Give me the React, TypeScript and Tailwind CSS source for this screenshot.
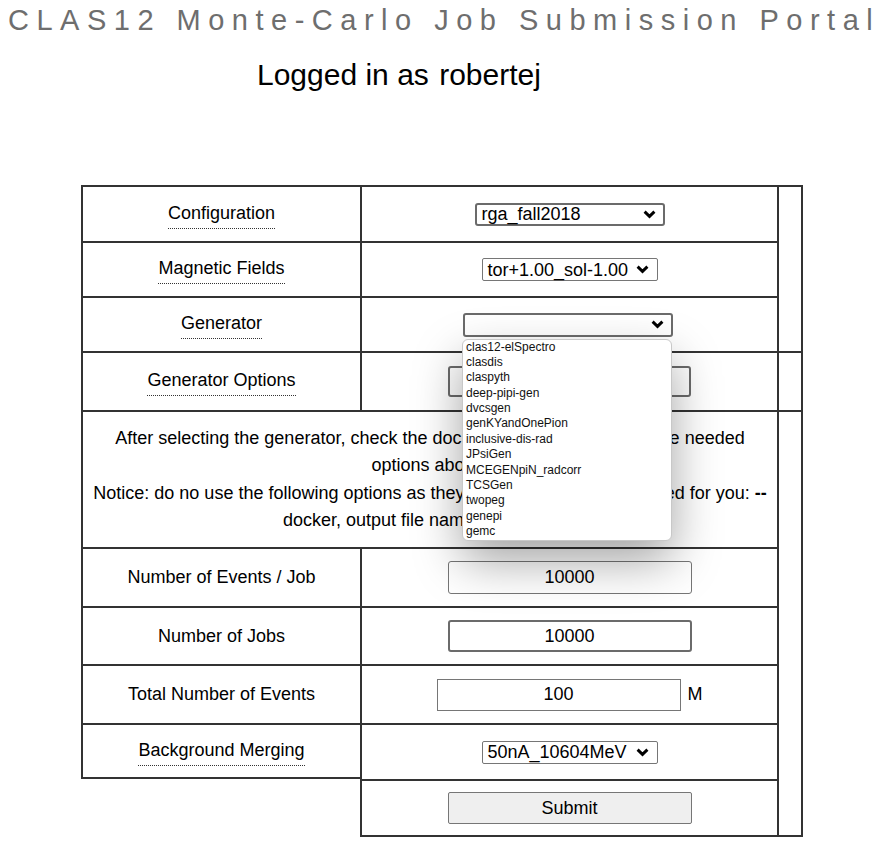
import React from "react";

const Chevron = () => (
  <svg width="13" height="9" viewBox="0 0 13 9" className="shrink-0">
    <polyline points="1.6,1.6 6.5,6.4 11.4,1.6" fill="none" stroke="#000" strokeWidth="2.9" />
  </svg>
);

const Label = ({ children, dotted }: { children: React.ReactNode; dotted?: boolean }) =>
  dotted ? (
    <span className="border-b border-dotted border-[#333] pt-[3px] pb-[4px] leading-[21px]">{children}</span>
  ) : (
    <span className="leading-[21px]">{children}</span>
  );

const options = [
  "clas12-elSpectro",
  "clasdis",
  "claspyth",
  "deep-pipi-gen",
  "dvcsgen",
  "genKYandOnePion",
  "inclusive-dis-rad",
  "JPsiGen",
  "MCEGENpiN_radcorr",
  "TCSGen",
  "twopeg",
  "genepi",
  "gemc",
];

const cell = "border-t-2 border-l-2 border-[#333] flex items-center justify-center";

export default function App() {
  return (
    <div className="min-h-[849px] bg-white text-black font-['Liberation_Sans',Arial,sans-serif]">
      <div className="pt-[4px] pl-[8px] whitespace-nowrap text-[29px] leading-[33px] tracking-[7.5px] text-[#6e6e6e]">
        CLAS12 Monte-Carlo Job Submission Portal
      </div>
      <div className="mt-[21px] pl-[257px] text-[30px] leading-[34px] whitespace-nowrap">
        Logged in as <span className="ml-[2px]">robertej</span>
      </div>

      <div className="mt-[93px] ml-[81px] grid w-[722px] grid-cols-[279px_417px_26px] grid-rows-[56px_55px_55px_59px_137px_59px_58px_59px_56px_58px] text-[18px]">
        {/* Row 1 */}
        <div className={cell}>
          <Label dotted>Configuration</Label>
        </div>
        <div className={cell}>
          <div className="flex h-[23px] w-[190px] items-center justify-between rounded-[3px] border-2 border-[#6b6b6b] pl-[5px] pr-[7px] leading-none">
            <span>rga_fall2018</span>
            <Chevron />
          </div>
        </div>
        <div className="row-span-3 border-t-2 border-l-2 border-r-2 border-[#333]" />

        {/* Row 2 */}
        <div className={cell}>
          <Label dotted>Magnetic Fields</Label>
        </div>
        <div className={cell}>
          <div className="flex h-[23px] w-[176px] items-center justify-between rounded-[2px] border border-[#767676] pl-[5px] pr-[8px] leading-none">
            <span>tor+1.00_sol-1.00</span>
            <Chevron />
          </div>
        </div>

        {/* Row 3 */}
        <div className={cell}>
          <Label dotted>Generator</Label>
        </div>
        <div className={`${cell} pr-[3px]`}>
          <div className="relative">
            <div className="flex h-[24px] w-[210px] items-center justify-end rounded-[3px] border-2 border-[#6b6b6b] pr-[7px]">
              <Chevron />
            </div>
            <div className="absolute left-[-1px] top-[26px] z-10 w-[210px] overflow-hidden rounded-[6px] border border-[#c8c8c8] bg-white shadow-[0_20px_48px_rgba(0,0,0,0.36)]">
              {options.map((o) => (
                <div key={o} className="h-[15.4px] pl-[3px] text-[12px] leading-[15.4px] text-[#111]">
                  {o}
                </div>
              ))}
            </div>
          </div>
        </div>

        {/* Row 4 */}
        <div className={cell}>
          <Label dotted>Generator Options</Label>
        </div>
        <div className={cell}>
          <div className="h-[31px] w-[243px] rounded-[3px] border-2 border-[#6b6b6b] bg-white" />
        </div>
        <div className="border-t-2 border-l-2 border-r-2 border-[#333]" />

        {/* Row 5 */}
        <div className={`${cell} col-span-2 text-center leading-[27.5px]`}>
          <div>
            After selecting the generator, check the documentation and provide the needed
            <br />
            options above.
            <br />
            Notice: do no use the following options as they will be automatically added for you: <b>--</b>
            <br />
            docker, output file name, and events.
          </div>
        </div>
        <div className="row-span-6 border-t-2 border-l-2 border-r-2 border-b-2 border-[#333]" />

        {/* Row 6 */}
        <div className={cell}>
          <Label>Number of Events / Job</Label>
        </div>
        <div className={cell}>
          <div className="flex h-[33px] w-[244px] items-center justify-center rounded-[3px] border border-[#767676] bg-white">
            10000
          </div>
        </div>

        {/* Row 7 */}
        <div className={cell}>
          <Label>Number of Jobs</Label>
        </div>
        <div className={cell}>
          <div className="flex h-[32px] w-[244px] items-center justify-center rounded-[3px] border-2 border-[#6b6b6b] bg-white">
            10000
          </div>
        </div>

        {/* Row 8 */}
        <div className={cell}>
          <Label>Total Number of Events</Label>
        </div>
        <div className={cell}>
          <div className="flex items-center gap-[7px]">
            <div className="flex h-[32px] w-[244px] items-center justify-center border border-[#767676] bg-white">
              100
            </div>
            <span>M</span>
          </div>
        </div>

        {/* Row 9 */}
        <div className={`${cell} border-b-2`}>
          <Label dotted>Background Merging</Label>
        </div>
        <div className={cell}>
          <div className="flex h-[23px] w-[176px] items-center justify-between rounded-[2px] border border-[#767676] pl-[5px] pr-[8px] leading-none">
            <span>50nA_10604MeV</span>
            <Chevron />
          </div>
        </div>

        {/* Row 10 */}
        <div />
        <div className={`${cell} border-b-2`}>
          <div className="flex h-[32px] w-[244px] items-center justify-center rounded-[2px] border border-[#767676] bg-[#efefef]">
            Submit
          </div>
        </div>
      </div>
    </div>
  );
}
